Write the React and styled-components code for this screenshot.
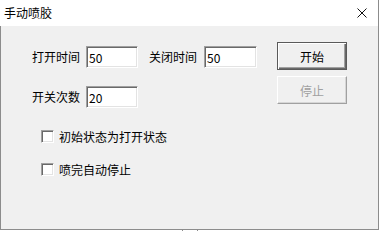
import styled, { createGlobalStyle } from 'styled-components';

const GlobalStyle = createGlobalStyle`
  html, body {
    margin: 0;
    padding: 0;
    background: #fff;
  }
  body {
    font-family: "Noto Sans CJK SC", "Liberation Sans", sans-serif;
    font-size: 12px;
    color: #000;
  }
`;

const Window = styled.div`
  width: 379px;
  box-sizing: border-box;
  border-right: 1px solid #8c8c8c;
`;

const TitleBar = styled.div`
  height: 26px;
  display: flex;
  align-items: center;
  justify-content: space-between;
  background: #fff;
  padding: 0 11px 0 4px;
`;

const Title = styled.span`
  font-size: 12px;
  line-height: 14px;
`;

const Body = styled.div`
  height: 187px;
  background: #f0f0f0;
  border-left: 1px solid #8c8c8c;
  border-bottom: 1px solid #8c8c8c;
  display: flex;
  align-items: flex-start;
  gap: 20px;
  padding: 16px 0 0 31px;
`;

const Form = styled.div`
  margin-top: 4px;
  display: flex;
  flex-direction: column;
`;

const Row = styled.div`
  display: flex;
  align-items: center;
  height: 22px;
  margin-bottom: ${(p) => p.$gap || 0}px;
`;

const Label = styled.span`
  width: 48px;
  margin-left: ${(p) => p.$offset || 0}px;
  margin-right: ${(p) => p.$space || 6}px;
  line-height: 14px;
  white-space: nowrap;
`;

const Field = styled.input`
  width: ${(p) => p.$w || 52}px;
  height: 22px;
  box-sizing: border-box;
  margin: 0;
  padding: 0 0 0 2px;
  background: #fff;
  font-family: "Noto Sans CJK SC", "Liberation Sans", sans-serif;
  font-size: 12px;
  color: #000;
  border: 1px solid;
  border-color: #a0a0a0 #fff #fff #a0a0a0;
  box-shadow: inset 1px 1px #696969, inset -1px -1px #e3e3e3;
  outline: none;
`;

const Check = styled.label`
  display: flex;
  align-items: center;
  gap: 5px;
  height: 13px;
  margin-left: 9px;
  margin-bottom: ${(p) => p.$gap || 0}px;
  line-height: 14px;
`;

const Box = styled.span`
  width: 13px;
  height: 13px;
  box-sizing: border-box;
  background: #fff;
  border: 1px solid;
  border-color: #a0a0a0 #fff #fff #a0a0a0;
  box-shadow: inset 1px 1px #696969, inset -1px -1px #e3e3e3;
`;

const Buttons = styled.div`
  display: flex;
  flex-direction: column;
  gap: 6px;
`;

const Button = styled.button`
  width: 70px;
  height: 28px;
  box-sizing: border-box;
  margin: 0;
  padding: 0;
  background: #f0f0f0;
  font-family: "Noto Sans CJK SC", "Liberation Sans", sans-serif;
  font-size: 12px;
  color: ${(p) => (p.disabled ? '#a0a0a0' : '#000')};
  border: 1px solid;
  border-color: ${(p) => (p.$primary ? '#5a5a5a' : '#fff #a0a0a0 #a0a0a0 #fff')};
  box-shadow: ${(p) =>
    p.$primary
      ? 'inset 1px 1px #fff, inset -1px -1px #696969, inset -2px -2px #a0a0a0'
      : 'inset -1px -1px #d6d6d6'};
`;

const Below = styled.div`
  margin-left: 182px;
  width: 16px;
  height: 1px;
  box-sizing: border-box;
  border-left: 1px solid #8c8c8c;
  border-right: 1px solid #8c8c8c;
`;

function CloseIcon() {
  return (
    <svg width="10" height="10" viewBox="0 0 10 10">
      <path d="M0.5 0.5 L9.5 9.5 M9.5 0.5 L0.5 9.5" stroke="#111" strokeWidth="1" fill="none" />
    </svg>
  );
}

export default function App() {
  return (
    <>
      <GlobalStyle />
      <Window>
        <TitleBar>
          <Title>手动喷胶</Title>
          <CloseIcon />
        </TitleBar>
        <Body>
          <Form>
            <Row $gap={18}>
              <Label>打开时间</Label>
              <Field defaultValue="50" />
              <Label $offset={11} $space={7}>关闭时间</Label>
              <Field $w={53} defaultValue="50" />
            </Row>
            <Row $gap={22}>
              <Label>开关次数</Label>
              <Field defaultValue="20" />
            </Row>
            <Check $gap={20}>
              <Box />
              初始状态为打开状态
            </Check>
            <Check>
              <Box />
              喷完自动停止
            </Check>
          </Form>
          <Buttons>
            <Button $primary>开始</Button>
            <Button disabled>停止</Button>
          </Buttons>
        </Body>
      </Window>
      <Below />
    </>
  );
}
